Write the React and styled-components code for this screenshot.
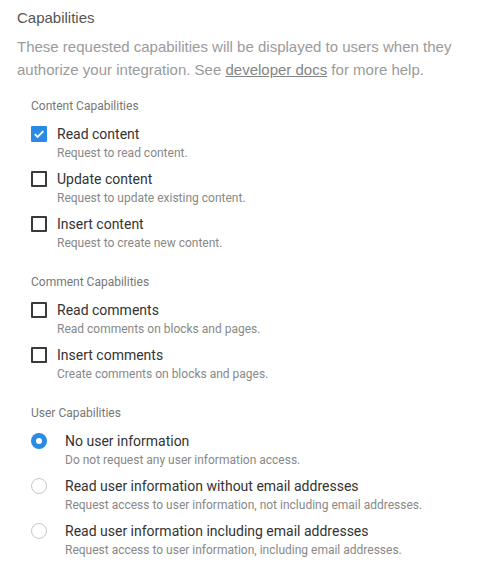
import React from "react";
import styled, { createGlobalStyle } from "styled-components";

const Global = createGlobalStyle`
  html, body { margin: 0; padding: 0; background: #fff; }
  body { font-family: Roboto, "Liberation Sans", Arial, sans-serif; }
`;

const Page = styled.div`
  padding: 8px 17px 20px 17px;
  width: 499px;
  box-sizing: border-box;
`;

const Title = styled.div`
  font-family: "Liberation Sans", Arial, sans-serif;
  font-size: 15px;
  line-height: 20px;
  color: #555;
`;

const Description = styled.p`
  margin: 6.5px 0 0 0;
  font-family: "Liberation Sans", Arial, sans-serif;
  font-size: 15px;
  line-height: 23px;
  color: #9b9b9b;
`;

const Link = styled.a`
  color: #858585;
  text-decoration: underline;
`;

const Sections = styled.div`
  display: flex;
  flex-direction: column;
  gap: 23px;
  margin-top: 17.5px;
  padding-left: 14px;
`;

const Section = styled.div`
  display: flex;
  flex-direction: column;
  gap: 11px;
`;

const SectionLabel = styled.div`
  font-size: 12px;
  line-height: 16px;
  color: #777;
`;

const Options = styled.div`
  display: flex;
  flex-direction: column;
  gap: 9px;
`;

const Option = styled.label`
  display: grid;
  grid-template-columns: ${(p) => (p.$radio ? "34px" : "26px")} 1fr;
  grid-template-rows: 18px 16px;
  row-gap: 2px;
  align-items: center;
`;

const OptionTitle = styled.div`
  font-size: 14px;
  line-height: 18px;
  color: #333;
`;

const OptionHint = styled.div`
  grid-column: 2;
  font-size: 12px;
  line-height: 16px;
  color: #888;
`;

const Box = styled.span`
  width: 16px;
  height: 16px;
  box-sizing: border-box;
  border-radius: 1px;
  display: flex;
  align-items: center;
  justify-content: center;
  background: ${(p) => (p.$checked ? "#2a8be6" : "#fff")};
  border: ${(p) => (p.$checked ? "none" : "2px solid #3a3a3a")};
`;

const Radio = styled.span`
  width: 16px;
  height: 16px;
  box-sizing: border-box;
  border-radius: 50%;
  display: flex;
  align-items: center;
  justify-content: center;
  background: ${(p) => (p.$checked ? "#2a8be6" : "#fff")};
  border: ${(p) => (p.$checked ? "none" : "1px solid #c8c8c8")};
`;

const Dot = styled.span`
  width: 6px;
  height: 6px;
  border-radius: 50%;
  background: #fff;
`;

const Check = () => (
  <svg width="12" height="12" viewBox="0 0 12 12">
    <path d="M1.8 6.2 L4.6 9 L10.3 3.2" fill="none" stroke="#fff" strokeWidth="1.8" />
  </svg>
);

const CheckOption = ({ checked, title, hint }) => (
  <Option>
    <Box $checked={checked}>{checked && <Check />}</Box>
    <OptionTitle>{title}</OptionTitle>
    <OptionHint>{hint}</OptionHint>
  </Option>
);

const RadioOption = ({ checked, title, hint }) => (
  <Option $radio>
    <Radio $checked={checked}>{checked && <Dot />}</Radio>
    <OptionTitle>{title}</OptionTitle>
    <OptionHint>{hint}</OptionHint>
  </Option>
);

export default function App() {
  return (
    <>
      <Global />
      <Page>
        <Title>Capabilities</Title>
        <Description>
          These requested capabilities will be displayed to users when they
          authorize your integration. See <Link>developer docs</Link> for more help.
        </Description>
        <Sections>
          <Section>
            <SectionLabel>Content Capabilities</SectionLabel>
            <Options>
              <CheckOption checked title="Read content" hint="Request to read content." />
              <CheckOption title="Update content" hint="Request to update existing content." />
              <CheckOption title="Insert content" hint="Request to create new content." />
            </Options>
          </Section>
          <Section>
            <SectionLabel>Comment Capabilities</SectionLabel>
            <Options>
              <CheckOption title="Read comments" hint="Read comments on blocks and pages." />
              <CheckOption title="Insert comments" hint="Create comments on blocks and pages." />
            </Options>
          </Section>
          <Section>
            <SectionLabel>User Capabilities</SectionLabel>
            <Options>
              <RadioOption checked title="No user information" hint="Do not request any user information access." />
              <RadioOption
                title="Read user information without email addresses"
                hint="Request access to user information, not including email addresses."
              />
              <RadioOption
                title="Read user information including email addresses"
                hint="Request access to user information, including email addresses."
              />
            </Options>
          </Section>
        </Sections>
      </Page>
    </>
  );
}
